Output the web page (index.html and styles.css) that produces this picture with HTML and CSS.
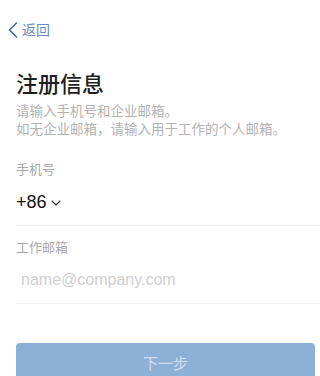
FILE: index.html
```html
<!DOCTYPE html>
<html lang="zh-CN">
<head>
    <meta charset="UTF-8">
    <meta name="viewport" content="width=device-width, initial-scale=1.0">
    <title>注册信息</title>
    <link rel="stylesheet" href="styles.css">
</head>
<body>
    <nav class="nav">
        <a class="back" href="#">
            <svg class="back-icon" width="10" height="16" viewBox="0 0 10 16"><path d="M8.5 1 L1.5 8 L8.5 15" fill="none" stroke="currentColor" stroke-width="1.6" stroke-linecap="round" stroke-linejoin="round"/></svg>
            <span>返回</span>
        </a>
    </nav>

    <main class="page">
        <h1 class="title">注册信息</h1>
        <p class="desc">请输入手机号和企业邮箱。<br>如无企业邮箱，请输入用于工作的个人邮箱。</p>

        <form class="form">
            <div class="field">
                <div class="label">手机号</div>
                <div class="value">
                    <span class="code">+86</span>
                    <svg class="caret" width="10" height="6" viewBox="0 0 10 6"><path d="M1 1 L5 5 L9 1" fill="none" stroke="currentColor" stroke-width="1.1" stroke-linecap="round" stroke-linejoin="round"/></svg>
                </div>
            </div>
            <div class="field">
                <div class="label">工作邮箱</div>
                <input class="input" type="email" placeholder="name@company.com">
            </div>
            <button class="next" type="button" disabled>下一步</button>
        </form>
    </main>
</body>
</html>
```

FILE: styles.css
```css
* {
    margin: 0;
    padding: 0;
    box-sizing: border-box;
}

body {
    font-family: "Liberation Sans", "Noto Sans CJK SC", sans-serif;
    background: #fff;
    color: #1f1f1f;
}

/* Top bar */
.nav {
    height: 60px;
    padding-left: 8px;
    display: flex;
    align-items: center;
}

.back {
    display: flex;
    align-items: center;
    gap: 4px;
    color: #5579b0;
    text-decoration: none;
    font-size: 14px;
    line-height: 20px;
}

.back-icon {
    color: #3f69a6;
}

.back span {
    color: #6a8bbd;
}

/* Content */
.page {
    padding-left: 16px;
}

.title {
    margin-top: 10px;
    font-size: 22px;
    line-height: 30px;
    font-weight: 500;
    color: #1f1f1f;
}

.desc {
    margin-top: 3px;
    font-size: 13.5px;
    line-height: 18px;
    color: #b3b3b3;
}

.form {
    margin-top: 9px;
}

.field {
    padding-top: 13px;
    padding-bottom: 11px;
    border-bottom: 1px solid #f2f2f2;
}

.label {
    font-size: 13px;
    line-height: 18px;
    color: #a8a8a8;
    margin-bottom: 11px;
}

.value {
    display: flex;
    align-items: center;
    gap: 4px;
    height: 24px;
}

.code {
    font-size: 18px;
    line-height: 24px;
    color: #111;
}

.caret {
    color: #333;
    margin-top: 2px;
}

.input {
    display: block;
    width: 100%;
    height: 24px;
    border: none;
    outline: none;
    padding: 0 0 0 5px;
    font-family: "Liberation Sans", sans-serif;
    font-size: 16px;
    line-height: 24px;
    color: #111;
    background: transparent;
}

.input::placeholder {
    color: #cfcfcf;
}

/* Button */
.next {
    display: block;
    width: calc(100% - 5px);
    height: 38px;
    margin-top: 39px;
    border: none;
    border-radius: 4px;
    background: #8db0d7;
    color: rgba(255, 255, 255, 0.6);
    font-family: "Noto Sans CJK SC", sans-serif;
    font-size: 15px;
}
```
